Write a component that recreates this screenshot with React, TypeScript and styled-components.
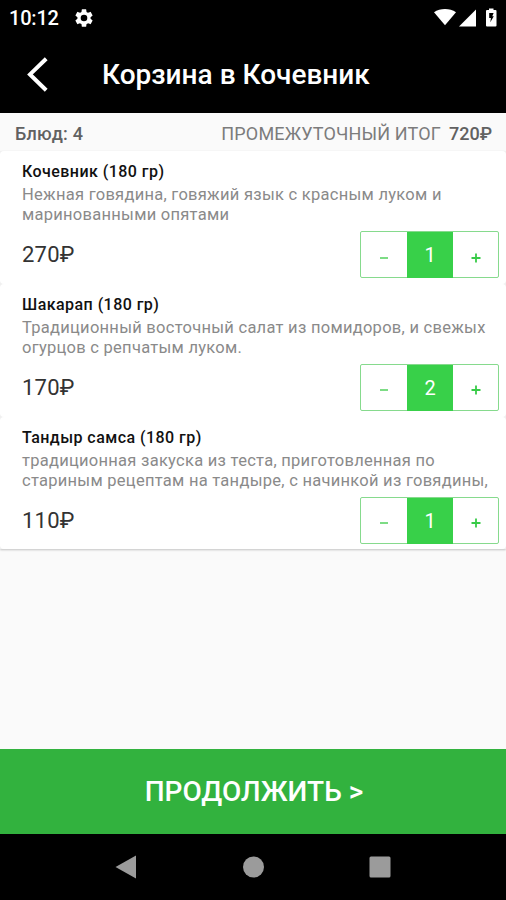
import React from "react";
import styled, { createGlobalStyle } from "styled-components";

const GlobalStyle = createGlobalStyle`
  * { box-sizing: border-box; }
  body { margin: 0; background: #fafafa; font-family: Roboto, "Noto Sans", sans-serif; }
  button { font-family: inherit; border: 0; padding: 0; margin: 0; background: none; }
`;

const Screen = styled.div`
  width: 506px;
  height: 900px;
  display: flex;
  flex-direction: column;
  background: #fafafa;
  overflow: hidden;
`;

const StatusBar = styled.div`
  height: 36px;
  flex: none;
  display: flex;
  align-items: center;
  padding: 0 7px 0 9px;
  background: #000;
  color: #fff;
`;

const Clock = styled.span`
  font-size: 20px;
  font-weight: 500;
  line-height: 36px;
  width: 64px;
  letter-spacing: -0.2px;
`;

const StatusIcons = styled.div`
  margin-left: auto;
  display: flex;
  align-items: center;
`;

const AppBar = styled.header`
  height: 77px;
  flex: none;
  display: flex;
  align-items: center;
  background: #000;
  color: #fff;
`;

const BackButton = styled.button`
  width: 102px;
  height: 77px;
  padding-left: 25px;
  display: flex;
  align-items: center;
`;

const Title = styled.h1`
  margin: 0;
  font-size: 28px;
  font-weight: 500;
  line-height: 77px;
  white-space: nowrap;
`;

const Summary = styled.div`
  height: 38px;
  flex: none;
  display: flex;
  align-items: center;
  padding: 3px 14px 0 15px;
  color: #616161;
  font-size: 18px;
  line-height: 34px;
  white-space: nowrap;
`;

const Count = styled.span`
  font-weight: 500;
  letter-spacing: 0.2px;
`;

const SubtotalLabel = styled.span`
  margin-left: auto;
  margin-right: 8px;
  color: #7c7c7c;
  letter-spacing: 0.16px;
`;

const Subtotal = styled.span`
  font-weight: 500;
`;

const List = styled.main`
  flex: none;
  display: flex;
  flex-direction: column;
  background: #f0f0f0;
  box-shadow: 0 1px 2px rgba(0, 0, 0, 0.22);
`;

const Card = styled.article`
  height: 132.8px;
  padding: 11px 7px 0 22px;
  background: #fff;
  border-radius: 4px;
`;

const DishName = styled.h2`
  margin: 0;
  font-size: 16px;
  font-weight: 500;
  line-height: 20px;
  letter-spacing: 0.45px;
  color: #111;
`;

const Description = styled.p`
  margin: 3px 0 0;
  height: 40px;
  font-size: 16.5px;
  line-height: 20px;
  letter-spacing: 0.27px;
  color: #8a8a8a;
  white-space: pre;
`;

const PriceRow = styled.div`
  display: flex;
  align-items: center;
  justify-content: space-between;
  margin-top: 6px;
  height: 47px;
`;

const Price = styled.span`
  font-size: 22px;
  line-height: 47px;
  letter-spacing: 0.25px;
  color: #333;
`;

const Stepper = styled.div`
  width: 139px;
  height: 47px;
  display: grid;
  grid-template-columns: 46px 46px 45px;
  border: 1px solid #86da8d;
  border-radius: 2px;
`;

const StepButton = styled.button`
  display: flex;
  align-items: center;
  justify-content: center;
  padding-top: 5px;
`;

const Quantity = styled.span`
  background: #38d049;
  color: #fff;
  font-size: 20px;
  line-height: 46px;
  text-align: center;
`;

const ContinueButton = styled.button`
  height: 85px;
  flex: none;
  margin-top: auto;
  padding-left: 2px;
  background: #32b23e;
  color: #fff;
  font-size: 28px;
  font-weight: 500;
  line-height: 86px;
  text-align: center;
`;

const NavBar = styled.nav`
  height: 66px;
  flex: none;
  display: flex;
  justify-content: center;
  align-items: center;
  gap: 105px;
  background: #000;
`;

type Dish = { name: string; lines: string[]; price: number; quantity: number };

const dishes: Dish[] = [
  {
    name: "Кочевник (180 гр)",
    lines: ["Нежная говядина, говяжий язык с красным луком и", "маринованными опятами"],
    price: 270,
    quantity: 1,
  },
  {
    name: "Шакарап (180 гр)",
    lines: ["Традиционный восточный салат из помидоров, и свежых", "огурцов с репчатым луком."],
    price: 170,
    quantity: 2,
  },
  {
    name: "Тандыр самса (180 гр)",
    lines: ["традиционная закуска из теста, приготовленная по", "стариным рецептам на тандыре, с начинкой из говядины,"],
    price: 110,
    quantity: 1,
  },
];

function GearIcon() {
  return (
    <svg width="22" height="22" viewBox="0 0 24 24" fill="#fff">
      <path d="M19.14 12.94c.04-.3.06-.61.06-.94s-.02-.64-.07-.94l2.03-1.58a.5.5 0 0 0 .12-.61l-1.92-3.32a.49.49 0 0 0-.59-.22l-2.39.96a7 7 0 0 0-1.62-.94l-.36-2.54a.48.48 0 0 0-.48-.41h-3.84a.48.48 0 0 0-.47.41l-.36 2.54c-.59.24-1.13.57-1.62.94l-2.39-.96a.48.48 0 0 0-.59.22L2.74 8.87a.48.48 0 0 0 .12.61l2.03 1.58c-.05.3-.09.63-.09.94s.02.64.07.94l-2.03 1.58a.5.5 0 0 0-.12.61l1.92 3.32c.12.22.37.29.59.22l2.39-.96c.5.38 1.03.7 1.62.94l.36 2.54c.05.24.24.41.48.41h3.84c.24 0 .44-.17.47-.41l.36-2.54c.59-.24 1.13-.56 1.62-.94l2.39.96c.22.08.47 0 .59-.22l1.92-3.32a.48.48 0 0 0-.12-.61zM12 15.6a3.6 3.6 0 1 1 0-7.2 3.6 3.6 0 0 1 0 7.2z" />
    </svg>
  );
}

function SignalIcons() {
  return (
    <svg width="66" height="22" viewBox="0 0 66 22" fill="#fff">
      <path d="M1 5.200C7.300.8 16.700.8 23 5.200L12 18.200z" />
      <path d="M43 2.500v17H26z" />
      <path d="M56 3V1.500h4.500V3h2q1 0 1 1v14.500q0 1-1 1h-8.500q-1 0-1-1V4q0-1 1-1z" />
      <path d="M56.200 6h4.400l-1.300 3.300h1.500l-3.500 6 .6-4.300h-1.700z" fill="#000" />
    </svg>
  );
}

function App() {
  return (
    <>
      <GlobalStyle />
      <Screen>
        <StatusBar>
          <Clock>10:12</Clock>
          <GearIcon />
          <StatusIcons>
            <SignalIcons />
          </StatusIcons>
        </StatusBar>
        <AppBar>
          <BackButton aria-label="Назад">
            <svg width="24" height="36" viewBox="0 0 24 36" fill="none" stroke="#fff" strokeWidth="4">
              <path d="M21.200 1.800 5 17.400l16.200 15.800" />
            </svg>
          </BackButton>
          <Title>Корзина в Кочевник</Title>
        </AppBar>
        <Summary>
          <Count>Блюд: 4</Count>
          <SubtotalLabel>ПРОМЕЖУТОЧНЫЙ ИТОГ</SubtotalLabel>
          <Subtotal>720₽</Subtotal>
        </Summary>
        <List>
          {dishes.map((dish) => (
            <Card key={dish.name}>
              <DishName>{dish.name}</DishName>
              <Description>{dish.lines.join("\n")}</Description>
              <PriceRow>
                <Price>{dish.price}₽</Price>
                <Stepper>
                  <StepButton aria-label="Меньше">
                    <svg width="10" height="10" viewBox="0 0 10 10">
                      <path d="M1 5h8" stroke="#6fd978" strokeWidth="1.800" />
                    </svg>
                  </StepButton>
                  <Quantity>{dish.quantity}</Quantity>
                  <StepButton aria-label="Больше">
                    <svg width="10" height="10" viewBox="0 0 10 10">
                      <path d="M.5 5h9M5 .5v9" stroke="#38cb48" strokeWidth="1.800" />
                    </svg>
                  </StepButton>
                </Stepper>
              </PriceRow>
            </Card>
          ))}
        </List>
        <ContinueButton>ПРОДОЛЖИТЬ &gt;</ContinueButton>
        <NavBar>
          <svg width="22" height="24" viewBox="0 0 22 24" fill="#9b9b9b">
            <path d="M21 .5v23L.5 12z" />
          </svg>
          <svg width="22" height="22" viewBox="0 0 22 22" fill="#9b9b9b">
            <circle cx="11.500" cy="11" r="10.500" />
          </svg>
          <svg width="22" height="22" viewBox="0 0 22 22" fill="#9b9b9b">
            <rect x=".5" y=".5" width="21" height="21" rx="1.500" />
          </svg>
        </NavBar>
      </Screen>
    </>
  );
}

export default App;
